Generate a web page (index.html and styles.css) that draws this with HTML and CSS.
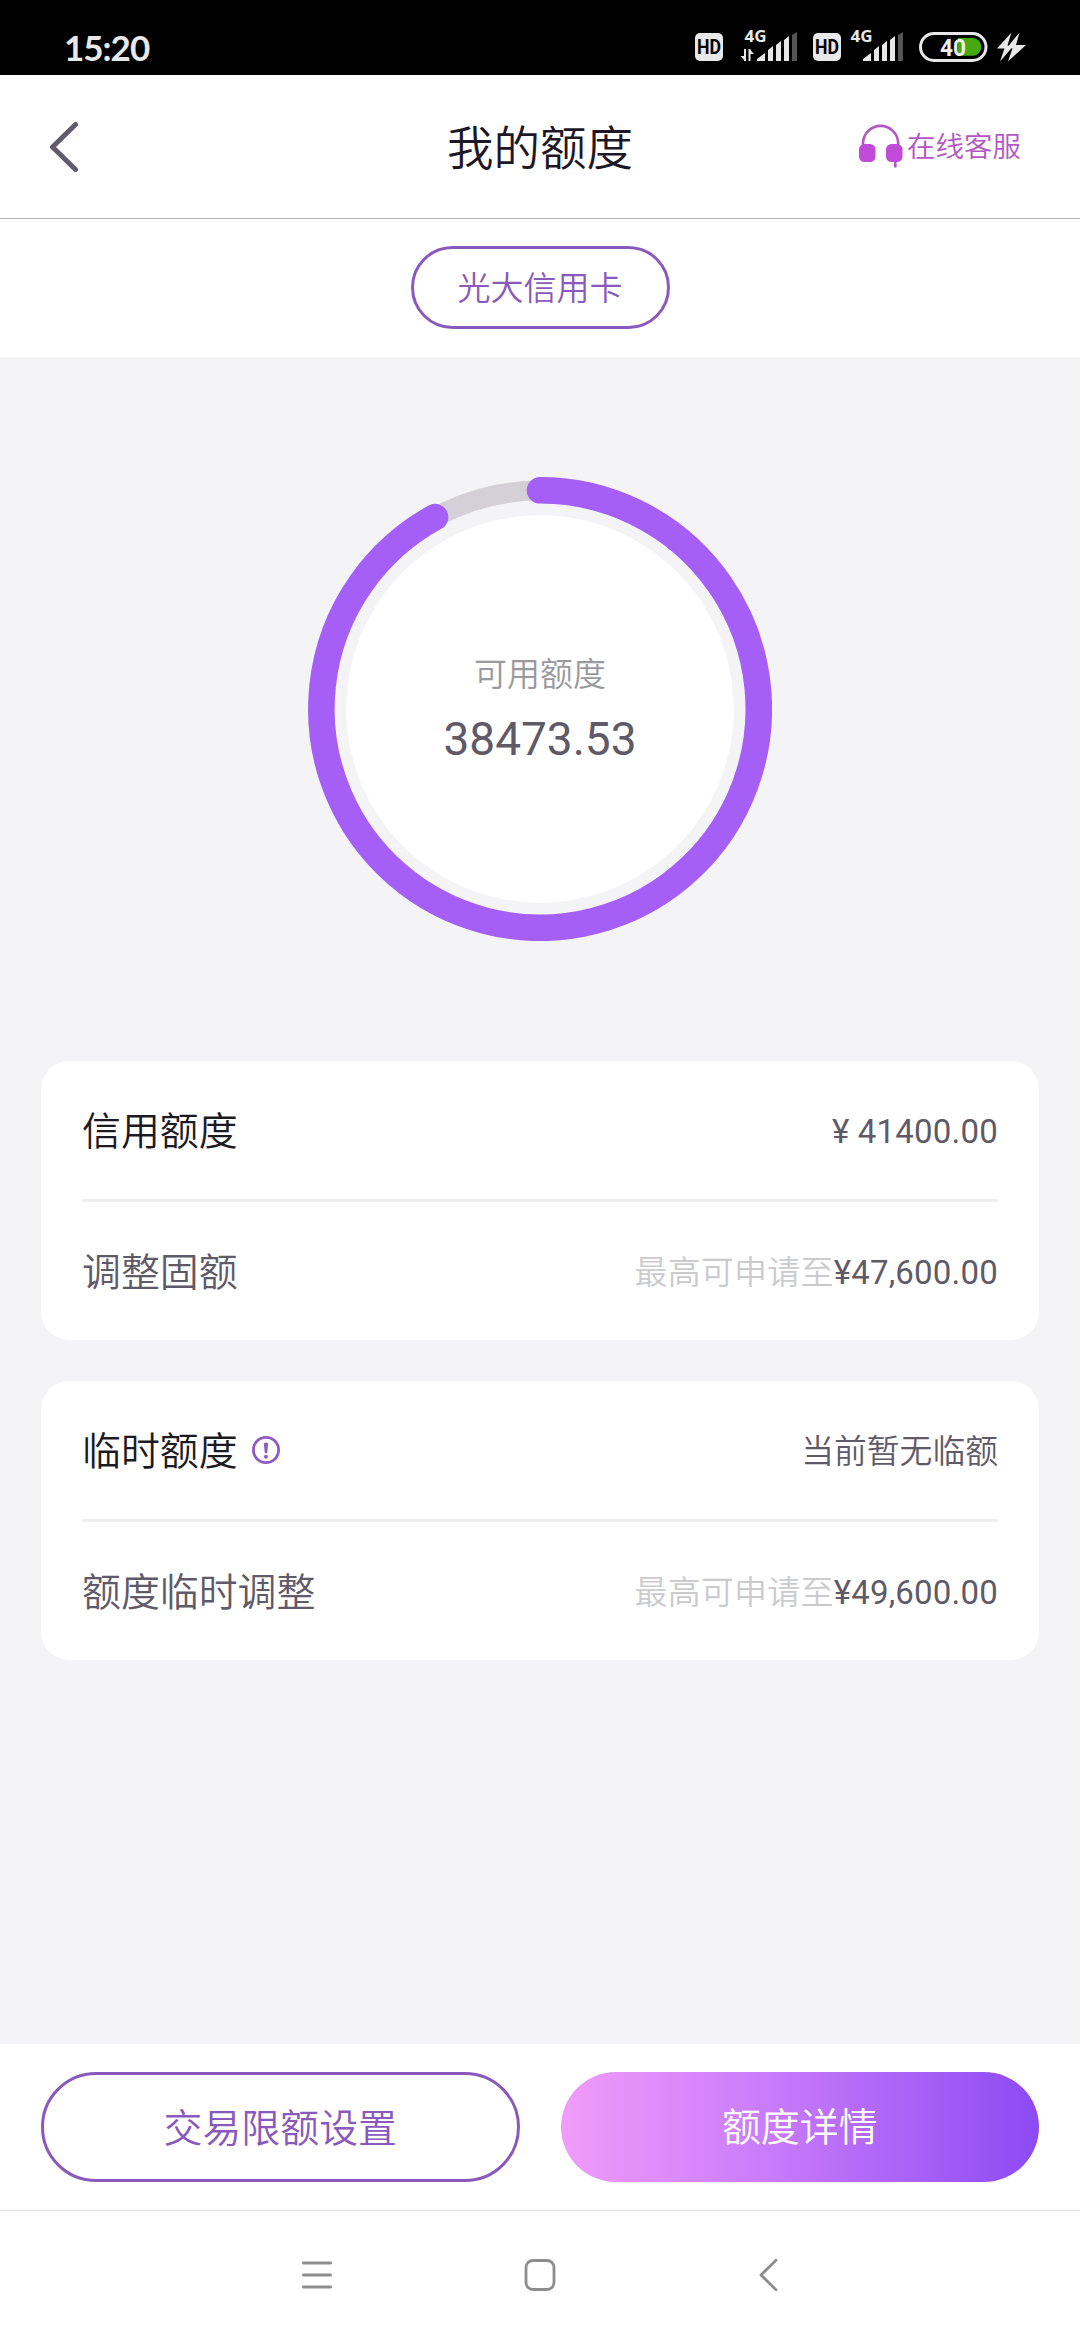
FILE: index.html
```html
<!DOCTYPE html>
<html lang="zh-CN">
<head>
<meta charset="utf-8">
<title>我的额度</title>
<link rel="stylesheet" href="styles.css">
</head>
<body>
<div class="screen">
  <div class="status">
    <span class="clock">15:20</span>
    <svg class="status-icons" width="332" height="52" viewBox="695 19 332 52">
      <defs>
        <g id="bars">
          <path fill="#e8e8e8" d="M0 61v-2l8-6v8zM11 61V50l5-4v15zM19 61V45l5-4v20zM27 61V40l5-4v25z"/>
          <path fill="#555" d="M35 61V35l5-3v29z"/>
        </g>
      </defs>
      <rect x="695" y="33" width="28" height="28" rx="5" fill="#e8e8e8"/>
      <text class="hd" x="697" y="54" textLength="24" lengthAdjust="spacingAndGlyphs">HD</text>
      <text class="net" x="744.5" y="42.3" textLength="22" lengthAdjust="spacingAndGlyphs">4G</text>
      <path d="M745 49v12M749.500 61V49" stroke="#e8e8e8" stroke-width="2"/>
      <path d="M740.500 56h4.500v5zM754 54h-4.500v-5z" fill="#e8e8e8"/>
      <use href="#bars" x="757"/>
      <rect x="813" y="33" width="28" height="28" rx="5" fill="#e8e8e8"/>
      <text class="hd" x="815" y="54" textLength="24" lengthAdjust="spacingAndGlyphs">HD</text>
      <text class="net" x="850.5" y="42.3" textLength="22" lengthAdjust="spacingAndGlyphs">4G</text>
      <use href="#bars" x="863"/>
      <rect x="920.5" y="33.5" width="65.500" height="27" rx="13.500" fill="none" stroke="#e8e8e8" stroke-width="3"/>
      <path d="M958 38h14.500a8.900 8.900 0 0 1 0 17.800H958z" fill="#45a90f"/>
      <text class="charge" x="940" y="55.500" textLength="26" lengthAdjust="spacingAndGlyphs">40</text>
      <path d="M1011.500 32.500L997 48.500h7.500l-4.500 13 12.500-14.500-5-1.500zM1019.500 32.500L1008 46.500l4.500 2-4.500 13 18-16.500h-10z" fill="#e8e8e8"/>
    </svg>
  </div>

  <header class="header">
    <svg class="back" width="28" height="50" viewBox="0 0 28 50"><path d="M25.500 2.500L2.500 25l23 22.500"/></svg>
    <h1 class="title">我的额度</h1>
    <a class="service">
      <svg width="46" height="46" viewBox="0 0 46 46">
        <path d="M5 22v-2.500a17.600 17.600 0 0 1 35.200 0V22M37.300 38v5.500" fill="none" stroke="#b257c4" stroke-width="2.600"/>
        <rect x="1" y="20" width="16.500" height="18" rx="5.500" fill="#bf4bd8"/>
        <rect x="28" y="20" width="16.500" height="18" rx="5.500" fill="#bf4bd8"/>
      </svg>
      <span class="service-text">在线客服</span>
    </a>
  </header>

  <div class="cardbar"><span class="pill">光大信用卡</span></div>

  <main class="content">
    <div class="gauge">
      <svg class="ring" width="464" height="464" viewBox="-232 -232 464 464">
        <circle r="218.500" fill="none" stroke="#d3d0d8" stroke-width="20"/>
        <circle r="193.700" fill="#fff"/>
        <path d="M0 -218.700A218.700 218.700 0 1 1 -105 -191.800" fill="none" stroke="#a55ff6" stroke-width="26.600" stroke-linecap="round"/>
      </svg>
      <div class="gauge-text">
        <span class="gauge-label">可用额度</span>
        <span class="gauge-value">38473.53</span>
      </div>
    </div>

    <section class="card">
      <div class="row">
        <span class="name strong">信用额度</span>
        <span class="value">¥ 41400.00</span>
      </div>
      <div class="row">
        <span class="name">调整固额</span>
        <span class="value"><span class="hint">最高可申请至</span>¥47,600.00</span>
      </div>
    </section>

    <section class="card">
      <div class="row">
        <span class="name strong">临时额度
          <svg class="info" width="28" height="28" viewBox="0 0 28 28">
            <circle cx="14" cy="14" r="12.600" fill="none" stroke="#8f5bc4" stroke-width="2.800"/>
            <path d="M11.800 7.200q2.200-1.400 4.400 0l-1 10h-2.400z" fill="#8f5bc4"/>
            <circle cx="14" cy="20.800" r="2" fill="#8f5bc4"/>
          </svg>
        </span>
        <span class="value none">当前暂无临额</span>
      </div>
      <div class="row">
        <span class="name">额度临时调整</span>
        <span class="value"><span class="hint">最高可申请至</span>¥49,600.00</span>
      </div>
    </section>
  </main>

  <footer class="actions">
    <button class="btn btn-outline">交易限额设置</button>
    <button class="btn btn-fill">额度详情</button>
  </footer>

  <nav class="sysnav">
    <svg width="30" height="34" viewBox="0 0 30 34"><path d="M1.400 5h27.200M1.400 17h27.200M1.400 29h27.200"/></svg>
    <svg width="32" height="34" viewBox="0 0 32 34"><rect x="2" y="2.500" width="28" height="29" rx="7"/></svg>
    <svg width="20" height="34" viewBox="0 0 20 34"><path d="M18 2.200L3 17l15 14.800"/></svg>
  </nav>
</div>
</body>
</html>
```
FILE: styles.css
```css
* { box-sizing: border-box; }
body {
  margin: 0;
  background: #fff;
  font-family: Roboto, "Noto Sans CJK SC", sans-serif;
  color: #5f5a68;
}
.screen {
  display: flex;
  flex-direction: column;
  width: 1080px;
  height: 2340px;
}
.status {
  display: flex;
  align-items: flex-start;
  justify-content: space-between;
  height: 75px;
  padding: 19px 53px 0 64px;
  background: #000;
}
.clock {
  margin-top: 9px;
  font: 700 35px/38px Lato, sans-serif;
  letter-spacing: -1px;
  color: #e8e8e8;
}
.status-icons { display: block; }
.hd { font: 700 19.500px Roboto, sans-serif; fill: #000; }
.net { font: 700 16px "Open Sans", sans-serif; fill: #e8e8e8; }
.charge { font: 700 23px Roboto, sans-serif; fill: #f0f0f0; }

.header {
  display: grid;
  grid-template-columns: 1fr auto 1fr;
  align-items: center;
  height: 144px;
  padding: 0 59px 0 50px;
  border-bottom: 1px solid #b5b5b5;
}
.back {
  fill: none;
  stroke: #625b70;
  stroke-width: 5;
  stroke-linecap: round;
  stroke-linejoin: round;
}
.title {
  margin: 5px 0 0 9px;
  font-size: 46.500px;
  font-weight: 350;
  line-height: 60px;
  color: #1c1826;
}
.service {
  display: flex;
  align-items: center;
  justify-content: flex-end;
  gap: 3px;
  font-size: 28.500px;
  font-weight: 350;
  line-height: 40px;
  color: #b257c4;
}
.service-text { padding-top: 3px; }
.cardbar {
  display: flex;
  justify-content: center;
  height: 138px;
  padding-top: 27px;
}
.pill {
  width: 259px;
  height: 83px;
  border: 3px solid #8959bd;
  border-radius: 42px;
  font-size: 33px;
  font-weight: 350;
  line-height: 80px;
  text-align: center;
  color: #8959bd;
}
.content {
  flex: 1;
  display: flex;
  flex-direction: column;
  gap: 41px;
  padding: 120px 41px 0;
  background: #f4f4f7;
}
.gauge {
  display: grid;
  place-items: center;
  margin-bottom: 79px;
}
.ring, .gauge-text { grid-area: 1 / 1; }
.gauge-text {
  display: flex;
  flex-direction: column;
  align-items: center;
  padding-top: 10px;
}
.gauge-label { font-size: 33px; font-weight: 350; line-height: 50px; color: #9a999e; }
.gauge-value { font-size: 46px; line-height: 78px; }
.card {
  padding: 0 41px;
  border-radius: 28px;
  background: #fff;
}
.row {
  display: flex;
  align-items: center;
  justify-content: space-between;
  height: 138px;
}
.row + .row { height: 141px; border-top: 3px solid #eee; }
.name {
  display: flex;
  align-items: center;
  gap: 14px;
  padding-top: 4px;
  font-size: 38.900px;
  font-weight: 350;
  line-height: 56px;
}
.info { margin-top: -4px; }
.strong { color: #1c1a22; }
.value {
  padding-top: 4px;
  font-size: 33px;
  line-height: 48px;
  letter-spacing: 0.2px;
}
.none { font-size: 32.800px; font-weight: 350; letter-spacing: 0; }
.hint { font-size: 33px; font-weight: 350; color: #cbcbcd; }
.actions {
  display: grid;
  grid-template-columns: 1fr 1fr;
  gap: 41px;
  height: 166px;
  padding: 28px 41px;
  background: #fff;
}
.btn {
  height: 110px;
  padding: 2px 0 0;
  border: 0;
  border-radius: 55px;
  font-family: inherit;
  font-size: 38.900px;
  font-weight: 350;
  line-height: 104px;
}
.btn-outline { border: 3px solid #8959bd; background: #fff; color: #8959bd; }
.btn-fill { background: linear-gradient(90deg, #f09cf9, #c77afa 45%, #8d4af3); color: #fff; }
.sysnav {
  display: grid;
  grid-template-columns: 30px 32px 20px;
  column-gap: 192px;
  height: 130px;
  padding: 47px 0 0 302px;
  border-top: 1px solid #dedede;
}
.sysnav svg { fill: none; stroke: #8d8d8d; stroke-width: 2.800; stroke-linecap: round; stroke-linejoin: round; }
.sysnav svg:last-child { margin-left: 10px; }
```
